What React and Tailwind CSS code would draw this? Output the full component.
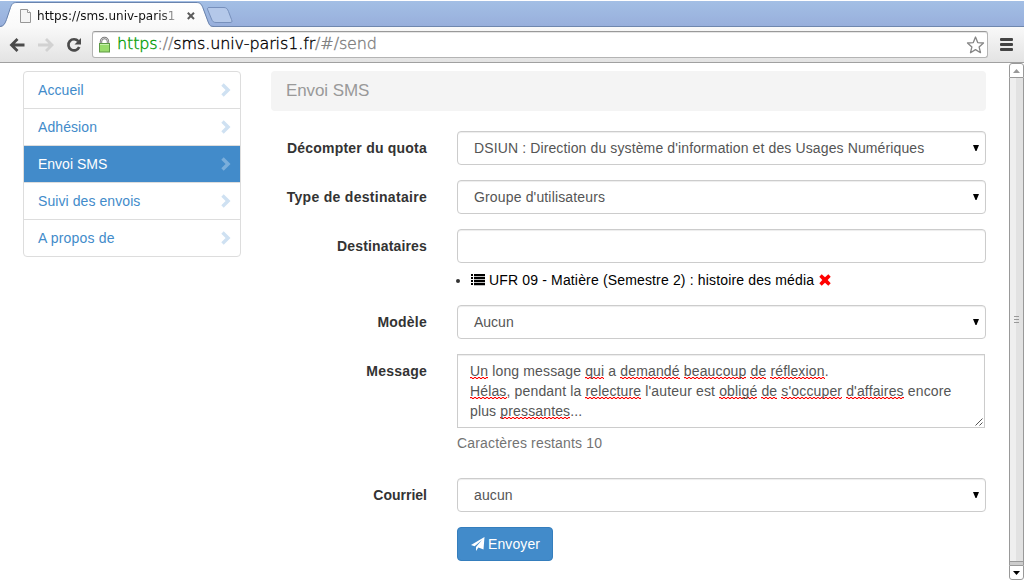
import React from "react";

const Chevron = ({ active }) => (
  <svg width="10" height="14" viewBox="0 0 10 14" className={active ? "text-[#7aaedb]" : "text-[#cfe1f2]"}>
    <path d="M0.3 2.7 2.7 0.3 9.5 7 2.7 13.7 0.3 11.3 4.6 7z" fill="currentColor" />
  </svg>
);

const NAV = ["Accueil", "Adhésion", "Envoi SMS", "Suivi des envois", "A propos de"];

const Sidebar = () => (
  <nav className="h-[186px] w-[218px] shrink-0 overflow-hidden rounded border border-[#ddd] tracking-[0.08px]">
    {NAV.map((label, i) => {
      const active = label === "Envoi SMS";
      return (
        <a
          key={label}
          className={`flex items-center justify-between pr-[9px] pl-[14px] leading-5 ${
            i < 4 ? "h-[37px] border-b border-[#ddd]" : "h-9 tracking-[0.18px]"
          } ${active ? "bg-[#428bca] tracking-normal text-white" : "text-[#428bca]"}`}
        >
          <span>{label}</span>
          <Chevron active={active} />
        </a>
      );
    })}
  </nav>
);

const Row = ({ label, children, className = "", spacing = "tracking-[0.22px]" }) => (
  <div className={`flex ${className}`}>
    <div className={`w-[156px] shrink-0 pt-[7px] text-right leading-5 font-bold text-[#333] ${spacing}`}>{label}</div>
    <div className="ml-[30px] w-[529px]">{children}</div>
  </div>
);

const Select = ({ children, spacing = "tracking-[0.12px]" }) => (
  <div className="flex h-[34px] items-center justify-between rounded border border-[#ccc] pr-[6px] pl-4 text-[#555] shadow-[inset_0_1px_1px_rgba(0,0,0,0.075)]">
    <span className={spacing}>{children}</span>
    <svg width="6" height="6" viewBox="0 0 6 6">
      <path d="M0 0H6L3.500 6H2.500z" fill="#000" />
    </svg>
  </div>
);

const Sp = ({ children }) => (
  <span className="inline-block h-5 bg-[linear-gradient(90deg,#f00_50%,#ff000030_50%),linear-gradient(90deg,#ff000030_50%,#f00_50%)] bg-[length:4px_1px,4px_1px] bg-[position:0_16px,0_17px] bg-repeat-x align-top">
    {children}
  </span>
);

const Browser = () => (
  <header className="h-[63px] border-b border-[#a0a0a0]">
    <div className="relative h-[27px] border-t border-t-white border-b border-b-[#6f87ae] bg-linear-to-b from-[#a3bfe5] to-[#98afdc]">
      <svg className="absolute top-0 left-0" width="236" height="27" viewBox="0 0 236 27">
        <defs>
          <linearGradient id="tab" x1="0" y1="0" x2="0" y2="1">
            <stop offset="0" stopColor="#fff" />
            <stop offset="1" stopColor="#f9f9f9" />
          </linearGradient>
        </defs>
        <path
          d="M0 26C4 25.500 5 23 6.500 19L10.500 7C11.800 3 13 1.800 17 1.800H196C200 1.800 201 3 202.500 6.500L208 21C209.500 25 210.500 25.600 214 26V27H0z"
          fill="url(#tab)"
        />
        <path
          d="M0 25.500C4 25 5 22.500 6.500 18.500L10.500 6.500C11.800 2.800 13 1.500 17 1.500H196C200 1.500 201.300 2.800 202.800 6.500L208.200 21C209.600 24.700 210.500 25.300 214 25.500"
          fill="none"
          stroke="#6b84ad"
        />
        <path
          d="M209 6.500H224C226.500 6.500 227.500 8 228.500 10.500L231.500 18.500C232.500 21 232 21.500 230 21.500H216C213.500 21.500 212.500 20.500 211.500 18L207.800 9C207.200 7.300 207.300 6.500 209 6.500z"
          fill="#b4c8e9"
          stroke="#7790bc"
        />
        <path d="M20.500 8.500H27.500L30.500 11.500V21.500H20.500z" fill="#f4f4f4" stroke="#979797" />
        <path d="M27.500 8.500V11.500H30.500" fill="#fff" stroke="#979797" />
        <path d="M187.800 11.800L194 18M194 11.800L187.800 18" stroke="#5c5c5c" strokeWidth="2" />
      </svg>
      <div className="relative ml-[37px] w-[139px] overflow-hidden bg-linear-to-r from-[#111] from-88% to-[#bbb] bg-clip-text pt-[6px] text-[12px] leading-[19px] tracking-[0.03px] whitespace-nowrap text-transparent [font-family:'DejaVu_Sans',sans-serif]">
        https://sms.univ-paris1
      </div>
    </div>
    <div className="flex h-[35px] items-center bg-linear-to-b from-[#f9f9f9] to-[#e3e3e3] pl-[9px]">
      <svg width="73" height="18" viewBox="0 0 73 18" fill="none">
        <path d="M2.500 9H15.500M8.500 3L2.500 9L8.500 15" stroke="#4b4b4b" strokeWidth="2.800" />
        <path d="M29 9H42M37 3L43 9L37 15" stroke="#d2d2d2" strokeWidth="2.800" />
        <path d="M69.300 5.200A5.600 5.600 0 1 0 70.200 11" stroke="#4b4b4b" strokeWidth="2.700" />
        <path d="M72 2V8.500H65.500z" fill="#4b4b4b" />
      </svg>
      <div className="ml-[10px] flex h-[27px] w-[896px] items-center rounded-[3px] border border-[#b4b4b4] border-t-[#999] bg-white pl-[5px] shadow-[inset_0_1px_0_#e6e6e6]">
        <svg width="13" height="18" viewBox="0 0 13 18">
          <path d="M3 8V5.500A3.500 3.500 0 0 1 10 5.500V8" fill="none" stroke="#777" strokeWidth="2.400" />
          <path d="M3 8V5.500A3.500 3.500 0 0 1 10 5.500V8" fill="none" stroke="#ddd" strokeWidth="0.800" />
          <rect x="1.500" y="7.500" width="10" height="8.500" fill="#99dc6c" stroke="#5d9945" />
          <path d="M2 8.500H11" stroke="#c8f0ae" />
        </svg>
        <div className="-mt-[2px] ml-[6px] text-[16px] leading-5 font-extralight tracking-[-0.13px] text-[#808080] [-webkit-text-stroke:0.35px_currentColor] [font-family:'DejaVu_Sans_Light','DejaVu_Sans',sans-serif]">
          <span className="text-[#009a00]">https</span>://<span className="text-black">sms.univ-paris1.fr</span>/#/send
        </div>
        <svg className="mr-[2px] ml-auto" width="19" height="18" viewBox="0 0 18 18">
          <path d="M9 1L11.200 6.600L17 7L12.600 10.900L14 16.700L9 13.600L4 16.700L5.400 10.900L1 7L6.800 6.600z" fill="#fff" stroke="#858585" strokeWidth="1.300" strokeLinejoin="round" />
        </svg>
      </div>
      <div className="ml-3 flex w-[13px] flex-col gap-[2px]">
        <i className="h-[3px] rounded-[1px] bg-[#444]" />
        <i className="h-[3px] rounded-[1px] bg-[#444]" />
        <i className="h-[3px] rounded-[1px] bg-[#444]" />
      </div>
    </div>
  </header>
);

const Scrollbar = () => (
  <div className="ml-auto flex h-[517px] w-[15px] flex-col">
    <div className="flex h-[15px] items-center justify-center rounded-t-[3px] border border-[#999] bg-white">
      <svg width="7" height="4" viewBox="0 0 7 4"><path d="M0 4L3.500 0L7 4z" fill="#999" /></svg>
    </div>
    <div className="flex flex-1 flex-col items-center justify-center gap-[2px] border-x border-[#999] bg-linear-to-r from-[#efefef] from-50% to-[#e2e2e2] to-50%">
      <i className="h-px w-[5px] bg-[#999]" />
      <i className="h-px w-[5px] bg-[#999]" />
      <i className="h-px w-[5px] bg-[#999]" />
    </div>
    <div className="h-1 border border-b-0 border-[#999] bg-[#ccc]" />
    <div className="flex h-[15px] items-center justify-center rounded-b-[3px] border border-[#999] bg-white">
      <svg width="7" height="4" viewBox="0 0 7 4"><path d="M0 0L3.500 4L7 0z" fill="#000" /></svg>
    </div>
  </div>
);

export default function App() {
  return (
    <div className="h-[580px] w-[1024px] overflow-hidden bg-white text-[14px] leading-5 [font-family:'Liberation_Sans',Arial,sans-serif]">
      <Browser />
      <div className="flex h-[517px]">
        <div className="flex pt-2 pl-[23px]">
          <Sidebar />
          <main className="ml-[30px] w-[715px]">
            <h1 className="h-10 rounded bg-[#f4f4f4] pl-[15px] text-[17px] leading-[39px] tracking-[-0.1px] text-[#999]">Envoi SMS</h1>
            <Row label="Décompter du quota" className="mt-5">
              <Select>DSIUN : Direction du système d'information et des Usages Numériques</Select>
            </Row>
            <Row label="Type de destinataire" className="mt-[15px]" spacing="tracking-[0.3px]">
              <Select spacing="tracking-[0.15px]">Groupe d'utilisateurs</Select>
            </Row>
            <Row label="Destinataires" className="mt-[15px]" spacing="tracking-[0.16px]">
              <div className="h-[34px] rounded border border-[#ccc] shadow-[inset_0_1px_1px_rgba(0,0,0,0.075)]" />
              <div className="mt-[7px] flex h-5 items-center text-black">
                <i className="mt-[2px] -ml-px size-1 rounded-full bg-[#333]" />
                <svg className="ml-[11px]" width="14" height="12" viewBox="0 0 14 12">
                  <path d="M0 0H2V2H0zM3 0H14V2.300H3zM0 3H2V5H0zM3 3H14V5.300H3zM0 6H2V8H0zM3 6H14V8.300H3zM0 9H2V11H0zM3 9H14V11.300H3z" fill="#000" />
                </svg>
                <span className="ml-1 tracking-[0.155px]">UFR 09 - Matière (Semestre 2) : histoire des média</span>
                <svg className="ml-[5px]" width="12" height="12" viewBox="0 0 12 12">
                  <path d="M2.700 0.300L6 3.300L9.300 0.300L11.700 2.700L8.700 6L11.700 9.300L9.300 11.700L6 8.700L2.700 11.700L0.300 9.300L3.300 6L0.300 2.700z" fill="red" />
                </svg>
              </div>
            </Row>
            <Row label="Modèle" className="mt-[15px]">
              <Select spacing="tracking-normal">Aucun</Select>
            </Row>
            <Row label="Message" className="mt-[15px]">
              <div className="relative h-[74px] w-[528px] border border-[#ccc] px-3 pt-[6px] tracking-[0.145px] whitespace-nowrap text-[#555] shadow-[inset_0_1px_1px_rgba(0,0,0,0.075)]">
                <div className="h-5"><Sp>Un</Sp> long message <Sp>qui</Sp> a <Sp>demandé</Sp> <Sp>beaucoup</Sp> <Sp>de</Sp> <Sp>réflexion</Sp>.</div>
                <div className="h-5"><Sp>Hélas</Sp>, pendant la <Sp>relecture</Sp> l'auteur est <Sp>obligé</Sp> <Sp>de</Sp> <Sp>s'occuper</Sp> <Sp>d'affaires</Sp> encore</div>
                <div className="h-5">plus <Sp>pressantes</Sp>...</div>
                <svg className="absolute right-px bottom-px" width="8" height="8" viewBox="0 0 8 8">
                  <path d="M0.500 7.500L7.500 0.500M4.500 7.500L7.500 4.500" stroke="#555" />
                </svg>
              </div>
              <p className="mt-[5px] tracking-[0.16px] text-[#737373]">Caractères restants 10</p>
            </Row>
            <Row label="Courriel" className="mt-[25px]" spacing="tracking-normal">
              <Select>aucun</Select>
            </Row>
            <button className="mt-[15px] ml-[186px] flex h-[34px] w-24 items-center rounded border border-[#357ebd] bg-[#428bca] pl-[13px] text-white">
              <svg width="14" height="14" viewBox="0 0 14 14">
                <path d="M13.500 0L0 8L3.600 9.200L11 3L5 10V14L7.400 10.600L12.500 12.500z" fill="#fff" />
              </svg>
              <span className="ml-[3px] tracking-[0.1px]">Envoyer</span>
            </button>
          </main>
        </div>
        <Scrollbar />
      </div>
    </div>
  );
}
